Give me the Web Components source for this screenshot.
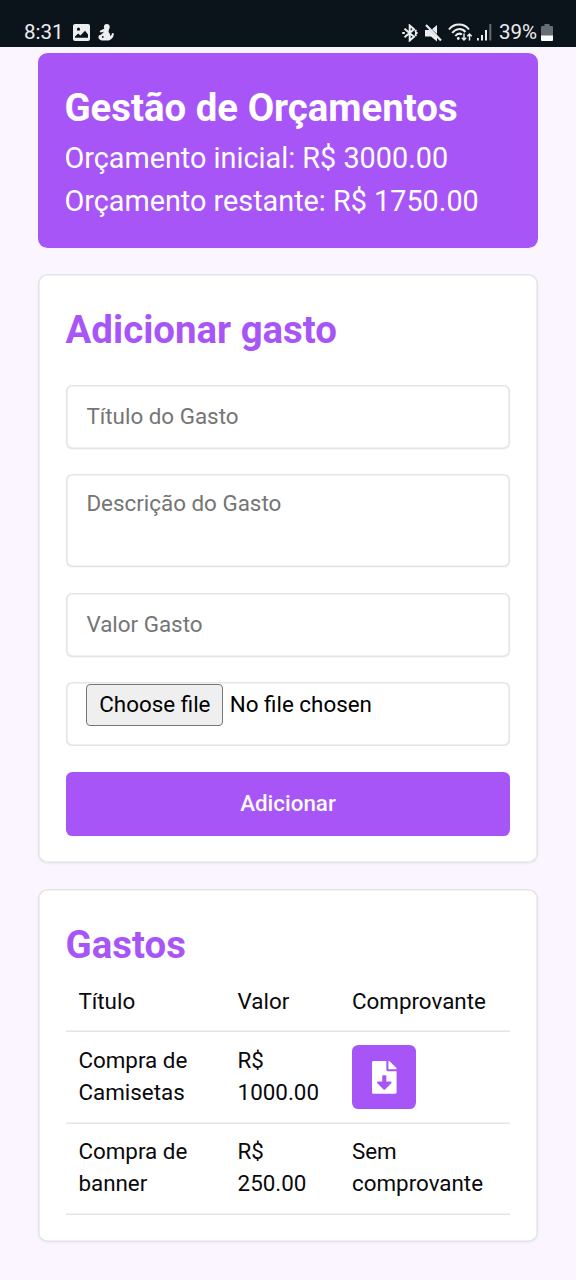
<!DOCTYPE html>
<html lang="pt-BR">
<head>
<meta charset="utf-8">
<title>Gestão de Orçamentos</title>
<style>
html,body{margin:0;padding:0}
body{background:#faf5ff;font-family:Roboto,"Liberation Sans",sans-serif;font-size:22.4px;line-height:32px;color:#09090b;width:576px;height:1280px;overflow:hidden}
</style>
</head>
<body>
<budget-app></budget-app>
<script>
const define = (name, html) => {
  const t = document.createElement('template');
  t.innerHTML = html;
  customElements.define(name, class extends HTMLElement {
    constructor() {
      super();
      this.attachShadow({ mode: 'open' }).appendChild(t.content.cloneNode(true));
    }
    connectedCallback() {
      const field = this.shadowRoot.querySelector('[data-field]');
      if (field) field.placeholder = this.getAttribute('label') || '';
    }
  });
};

define('status-bar', `
<style>
:host{display:flex;height:47px;box-sizing:border-box;background:#0c141b;color:#eceef0;padding:17px 23px 0 24px;justify-content:space-between;font-size:20.5px;line-height:31px}
.g{display:flex;height:31px;align-items:center}
svg{display:block;flex:none}
</style>
<div class="g"><span style="width:49px">8:31</span>
<svg width="17" height="17" viewBox="0 0 17 17"><path fill="#eceef0" fill-rule="evenodd" d="M2 0h13a2 2 0 0 1 2 2v13a2 2 0 0 1-2 2H2a2 2 0 0 1-2-2V2a2 2 0 0 1 2-2zM2 13.800h13v-3.400l-3-3.600-4.600 4.600-2.200-2-3.200 3zM5.500 3.600a1.600 1.600 0 1 0 0 3.200a1.600 1.600 0 0 0 0-3.200z"/></svg>
<svg width="17" height="17" viewBox="0 0 17 17" style="margin-left:8px"><g fill="#eceef0"><circle cx="8.800" cy="2.900" r="2.900"/><path d="M6.500 4.500L11 5 10.500 8c1.300 1.100 1.800 2.500 1.500 4 1.300-.2 1.900-1.200 1.900-2.900l2 .3c-.2 4-2.700 6.900-6.700 7.100H5C2 16.500 0 14.600.5 12.500c.3-1.200 1.300-1.900 2.500-1.800L6 7.800 2.500 8.600 1.600 7z"/></g><circle cx="4.800" cy="13" r=".9" fill="#0c141b"/></svg></div>
<div class="g">
<svg width="16" height="18" viewBox="0 0 16 18" fill="none" stroke="#eceef0" stroke-width="2"><path d="M2.500 4.800l9.500 8-4.300 3.700v-15L12 5.200l-9.500 8"/><path d="M.2 9h2.600M13 9h2.600M12.800 7.600l1.800-1.300M12.800 10.400l1.800 1.300"/></svg>
<svg width="17" height="18" viewBox="0 0 17 18" style="margin-left:7px"><path fill="#eceef0" d="M0 6h4.500l7.500 7.500V17.500L6 12.500H0zM7 5.200L12 1v9z"/><path d="M1 1l15 15.500" stroke="#eceef0" stroke-width="2.200"/></svg>
<svg width="25" height="19" viewBox="0 0 25 19" style="margin-left:6px" fill="none" stroke="#eceef0" stroke-width="2"><path d="M1 6.500C6-.2 16-.2 21 6.500M4.200 10C8 5 14 5 17.500 9M7.300 13C9.300 10.500 12 10.200 14 11.500"/><circle cx="10.300" cy="15.500" r="1.400" fill="#eceef0" stroke="none"/><path stroke-width="1.500" d="M16 10.500V17M13.800 14.800L16 17l2.200-2.200M21.500 17.500V11M19.300 13.200l2.200-2.200 2.200 2.200"/></svg>
<svg width="15" height="17" viewBox="0 0 15 17" style="margin-left:4px"><path fill="#eceef0" d="M0 14h1.800v2.500H0zM4 11h2v5.500H4zM8 6h2v10.500H8z"/><path fill="#666d73" d="M12.300 0h2v16.500h-2z"/></svg>
<span style="margin-left:7px;width:42px">39%</span>
<svg width="12" height="18" viewBox="0 0 12 18"><path fill="#666d73" d="M3.500 0h5v2H11a1 1 0 0 1 1 1v9H0V3a1 1 0 0 1 1-1h2.500z"/><path fill="#fff" d="M0 11.500h12V16a1 1 0 0 1-1 1H1a1 1 0 0 1-1-1z"/></svg>
</div>`);

define('budget-summary', `
<style>
:host{display:block;box-sizing:border-box;height:195px;background:#a855f7;color:#fff;border-radius:9.600px;padding:32.600px 26px 0}
h1{margin:0;font-size:38.400px;line-height:44px;font-weight:700}
p{margin:0;font-size:28.800px;line-height:43.500px}
h1+p{margin-top:6.800px}
</style><h1>Gestão de Orçamentos</h1><p>Orçamento inicial: R$ 3000.00</p><p>Orçamento restante: R$ 1750.00</p>`);

define('ui-card', `
<style>
:host{display:block;box-sizing:border-box;background:#fff;border-radius:9.600px;padding:27.200px;box-shadow:inset 0 0 0 1.600px #e4e4e7,0 1px 3px rgba(0,0,0,.05)}
::slotted(h2){margin:0;color:#a855f7;font-size:38.400px;line-height:56px;font-weight:700}
</style><slot></slot>`);

const fieldCss = `
:host{display:block}
input,textarea{display:block;box-sizing:border-box;width:100%;height:64px;margin:0;border:0;outline:0;resize:none;border-radius:6.400px;background:#fff;box-shadow:inset 0 0 0 1.600px #e4e4e7,0 1px 2px rgba(0,0,0,.04);padding:0 20.800px 1px;font:22.400px/32px Roboto,"Liberation Sans",sans-serif;color:#09090b}
textarea{height:92.400px;padding-top:12.600px}
::placeholder{color:#757575;opacity:1}`;
define('text-field', `<style>${fieldCss}</style><input data-field>`);
define('text-area-field', `<style>${fieldCss}</style><textarea data-field></textarea>`);

define('file-field', `
<style>
:host{display:flex;box-sizing:border-box;height:64px;border-radius:6.400px;background:#fff;box-shadow:inset 0 0 0 1.600px #e4e4e7;padding:1.600px 20.800px;align-items:flex-start;gap:6.400px;color:#000}
button{box-sizing:border-box;width:137px;height:42px;padding:0 0 2px;margin:0;border:1.500px solid #767676;border-radius:4px;background:#efefef;color:#000;font:22.400px/38px Roboto,"Liberation Sans",sans-serif}
span{line-height:40px}
</style><button>Choose file</button><span>No file chosen</span>`);

define('primary-button', `
<style>
:host{display:block}
button{display:block;width:100%;height:64px;border:0;margin:0;padding:0 0 2px;border-radius:6.400px;background:#a855f7;color:#fafafa;font:500 22.400px/32px Roboto,"Liberation Sans",sans-serif}
</style><button><slot></slot></button>`);

define('expense-form', `
<style>:host{display:grid;row-gap:25.800px;padding-top:27px}</style>
<text-field label="Título do Gasto"></text-field>
<text-area-field label="Descrição do Gasto"></text-area-field>
<text-field label="Valor Gasto"></text-field>
<file-field></file-field>
<primary-button>Adicionar</primary-button>`);

define('download-button', `
<style>
:host{display:flex;width:64px;height:64px;border-radius:6.400px;background:#a855f7;align-items:center;justify-content:center;position:relative;top:1px;left:.4px}
svg{display:block}
</style>
<svg width="24.600" height="32.800" viewBox="0 0 384 512"><path fill="#fff" d="M224 136V0H24C10.700 0 0 10.700 0 24v464c0 13.300 10.700 24 24 24h336c13.300 0 24-10.700 24-24V160H248c-13.200 0-24-10.800-24-24zm76.450 211.360l-96.420 95.700c-6.650 6.610-17.390 6.610-24.040 0l-96.420-95.700C73.420 337.290 80.540 320 94.820 320H160v-80c0-8.840 7.160-16 16-16h32c8.840 0 16 7.160 16 16v80h65.180c14.280 0 21.400 17.290 11.250 27.360zM377 105L279.100 7c-4.500-4.500-10.600-7-17-7H256v128h128v-6.100c0-6.300-2.500-12.400-7-16.900z"/></svg>`);

define('expense-row', `
<style>
:host{display:grid;grid-template-columns:159.200px 114.400px 1fr;box-shadow:inset 0 -1.600px #e4e4e7;padding-bottom:1.600px}
::slotted(*){padding:11.800px 12.800px 13.800px}
</style><slot></slot>`);

define('expense-table', `
<style>:host{display:block}</style>
<expense-row><div>Título</div><div>Valor</div><div>Comprovante</div></expense-row>
<expense-row><div>Compra de Camisetas</div><div>R$ 1000.00</div><div><download-button></download-button></div></expense-row>
<expense-row><div>Compra de banner</div><div>R$ 250.00</div><div>Sem comprovante</div></expense-row>`);

define('budget-app', `
<style>
:host{display:block}
main{display:flex;flex-direction:column;gap:26px;padding:6.400px 38.400px}
.form{height:588.200px}
.list{height:353.400px}
.list h2{line-height:57.400px}
</style>
<status-bar></status-bar>
<main>
<budget-summary></budget-summary>
<ui-card class="form"><h2>Adicionar gasto</h2><expense-form></expense-form></ui-card>
<ui-card class="list"><h2>Gastos</h2><expense-table></expense-table></ui-card>
</main>`);
</script>
</body>
</html>
